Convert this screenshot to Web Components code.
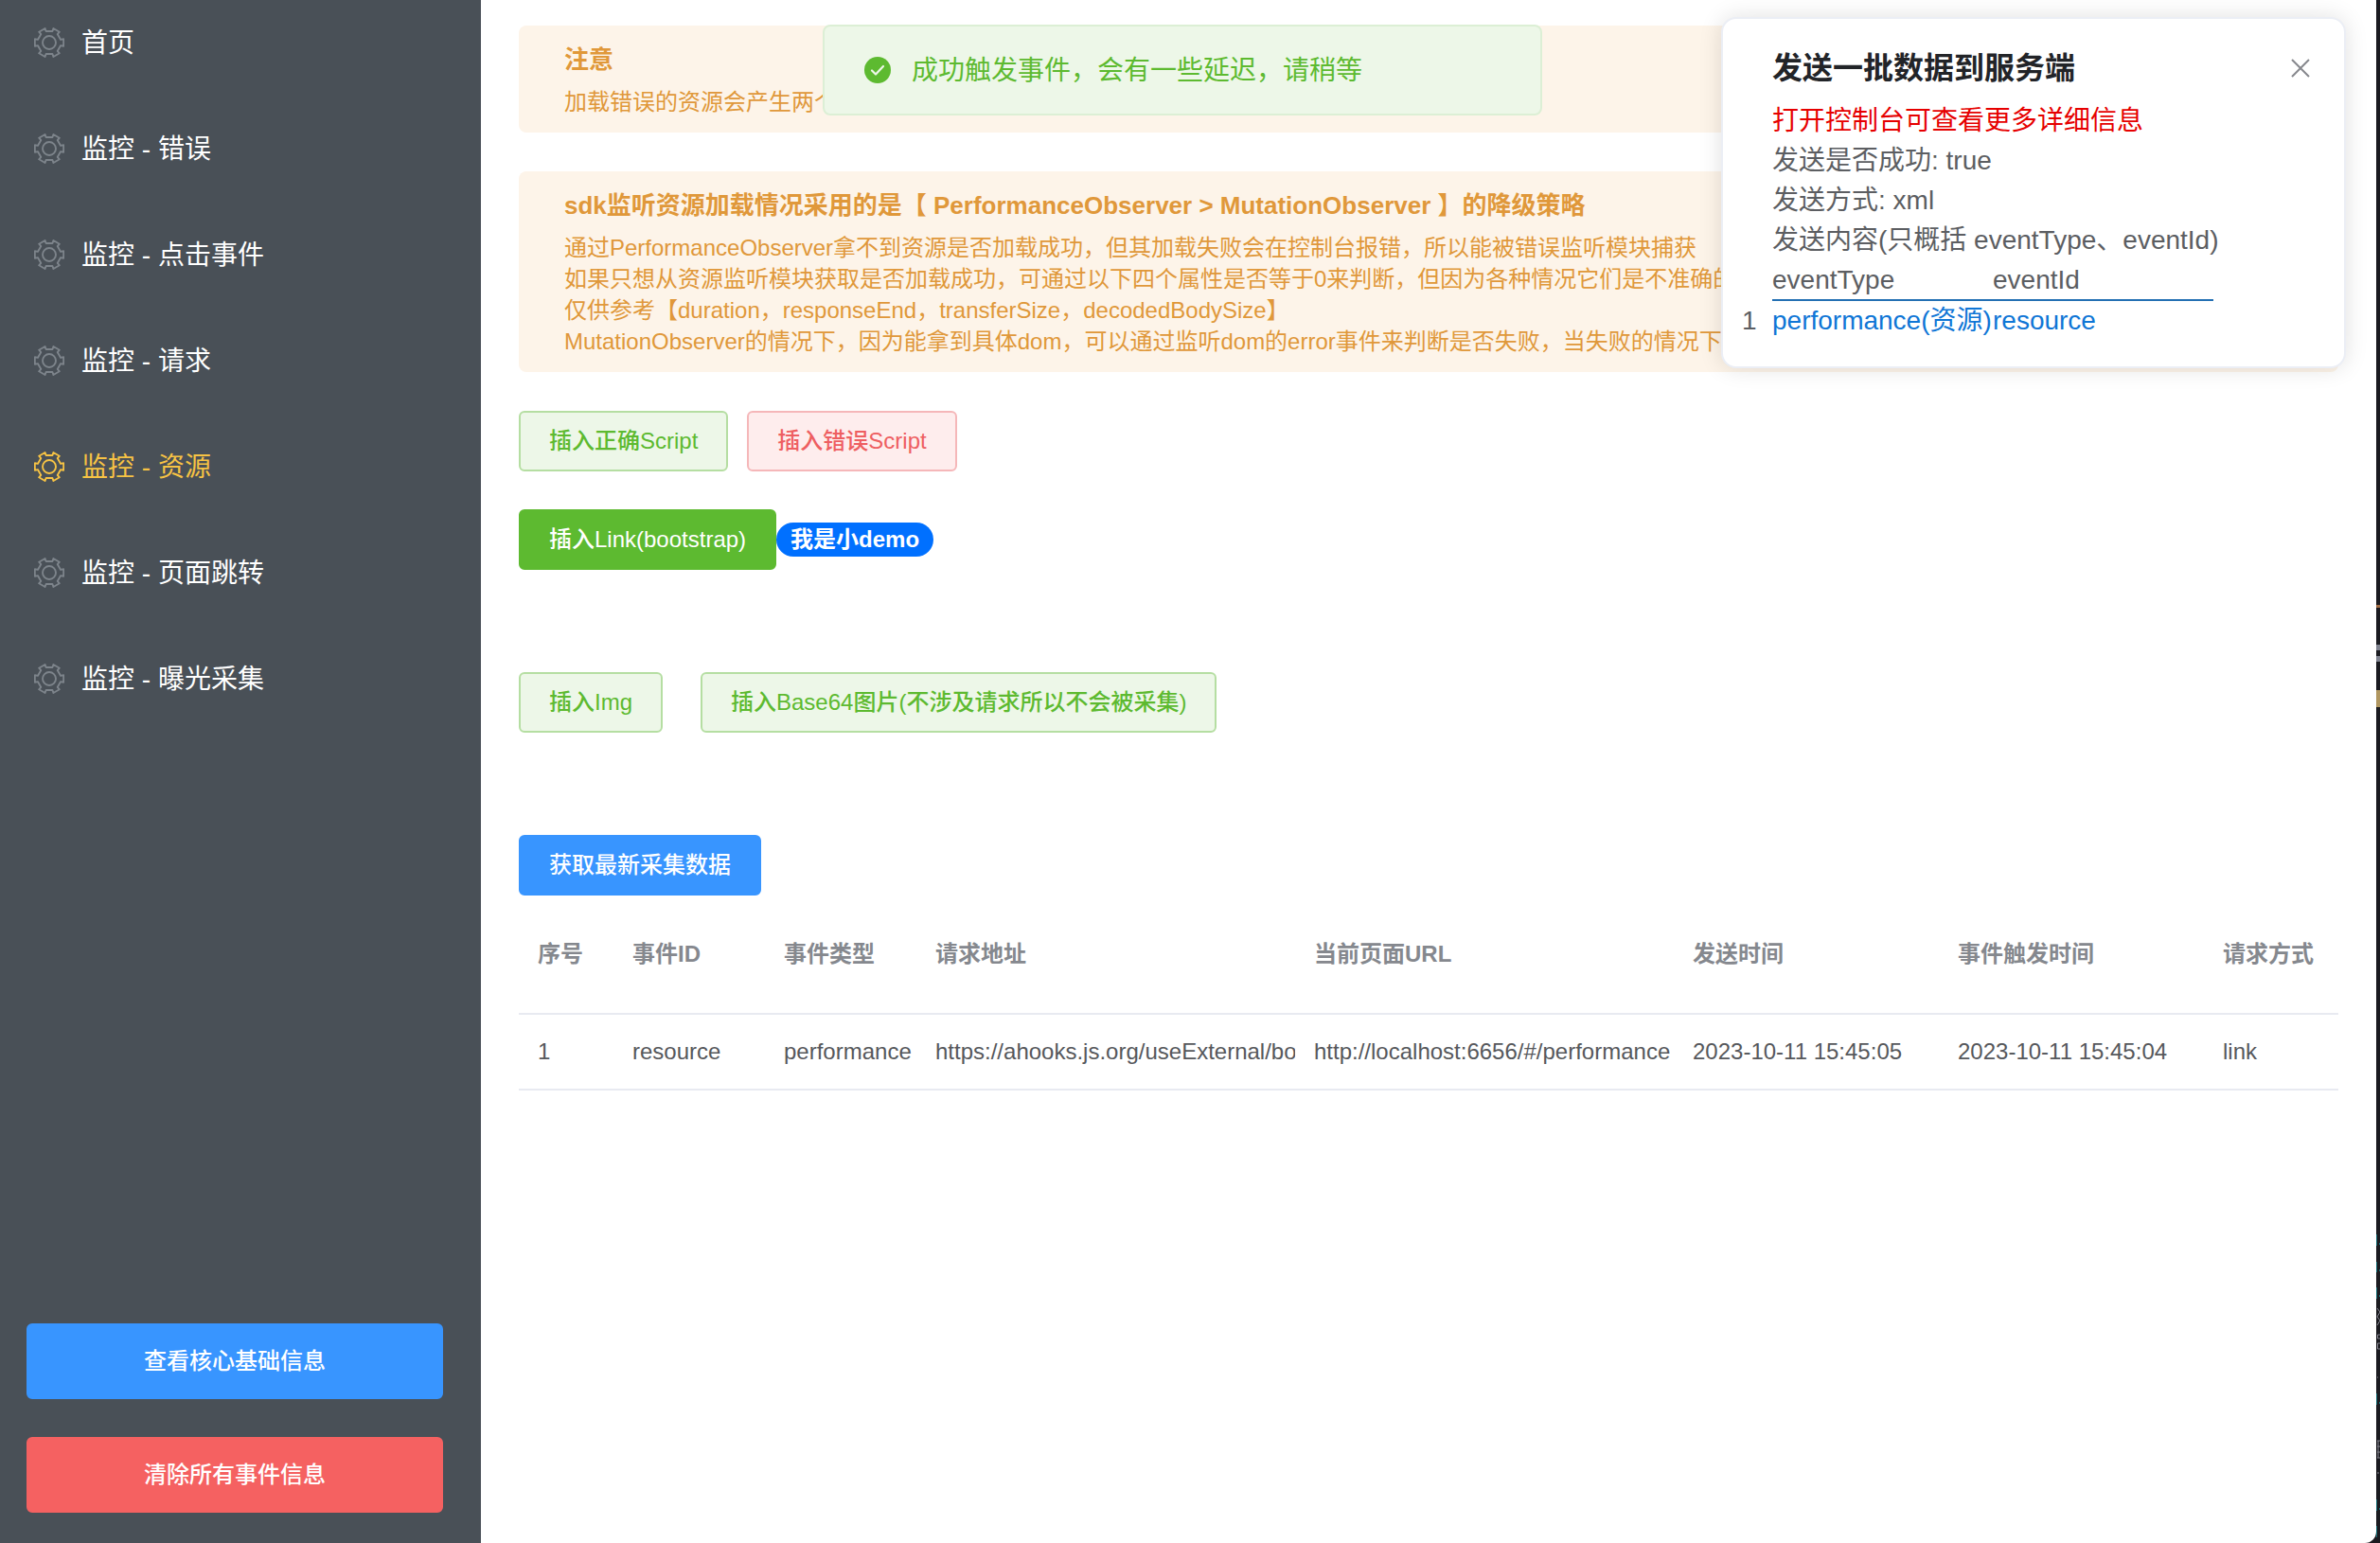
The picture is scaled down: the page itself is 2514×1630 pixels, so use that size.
<!DOCTYPE html>
<html lang="zh-CN">
<head>
<meta charset="utf-8">
<title>监控 - 资源</title>
<style>
  html, body { margin: 0; }
  body {
    background: #1b1b20;
    color: #5c5e62;
    font: 24px/34px "Liberation Sans", "Noto Sans CJK SC", sans-serif;
  }
</style>
</head>
<body>
<app-shell>
  <side-bar slot="side">
    <nav-item>首页</nav-item>
    <nav-item>监控 - 错误</nav-item>
    <nav-item>监控 - 点击事件</nav-item>
    <nav-item>监控 - 请求</nav-item>
    <nav-item active>监控 - 资源</nav-item>
    <nav-item>监控 - 页面跳转</nav-item>
    <nav-item>监控 - 曝光采集</nav-item>
    <ui-button slot="actions" kind="primary" size="large">查看核心基础信息</ui-button>
    <ui-button slot="actions" kind="danger" size="large">清除所有事件信息</ui-button>
  </side-bar>

  <warn-alert>
    <span slot="title">注意</span>
    加载错误的资源会产生两个
  </warn-alert>
  <warn-alert>
    <span slot="title">sdk监听资源加载情况采用的是【 PerformanceObserver &gt; MutationObserver 】的降级策略</span>
    通过PerformanceObserver拿不到资源是否加载成功，但其加载失败会在控制台报错，所以能被错误监听模块捕获<br>
    如果只想从资源监听模块获取是否加载成功，可通过以下四个属性是否等于0来判断，但因为各种情况它们是不准确的<br>
    仅供参考【duration，responseEnd，transferSize，decodedBodySize】<br>
    MutationObserver的情况下，因为能拿到具体dom，可以通过监听dom的error事件来判断是否失败，当失败的情况下
  </warn-alert>

  <button-row>
    <ui-button kind="success-plain">插入正确Script</ui-button>
    <ui-button kind="danger-plain">插入错误Script</ui-button>
  </button-row>
  <button-row space="large" joined>
    <ui-button kind="success">插入Link(bootstrap)</ui-button>
    <demo-badge>我是小demo</demo-badge>
  </button-row>
  <button-row space="large" wide>
    <ui-button kind="success-plain">插入Img</ui-button>
    <ui-button kind="success-plain">插入Base64图片(不涉及请求所以不会被采集)</ui-button>
  </button-row>
  <button-row space="none">
    <ui-button kind="primary">获取最新采集数据</ui-button>
  </button-row>
  <event-table></event-table>
</app-shell>
<toast-message>成功触发事件，会有一些延迟，请稍等</toast-message>
<notice-card></notice-card>

<script>
  function define(name, html) {
    const template = document.createElement('template');
    template.innerHTML = html;
    customElements.define(name, class extends HTMLElement {
      constructor() {
        super();
        this.attachShadow({ mode: 'open' }).append(template.content.cloneNode(true));
      }
    });
  }

  define('app-shell', `
    <style>
      :host { display: grid; grid-template-columns: 508px minmax(0, 1fr) 4px; min-height: 100vh; }
      main { background: #fff; padding: 27px 40px 40px; border-radius: 0 0 12px 0; }
      .edge { overflow: hidden; position: relative; }
      svg { display: block; position: absolute; top: 0; left: 0; }
    </style>
    <slot name="side"></slot>
    <main><slot></slot></main>
    <div class="edge" aria-hidden="true">
      <svg width="4" height="1630" viewBox="0 0 4 1630">
        <path fill="#a06c44" d="M0 639h4v3H0z"/>
        <path fill="#80838f" d="M0 681h4v6H0zM0 693h4v6H0z"/>
        <path fill="#b09660" d="M0 729h4v18H0z"/>
        <path fill="#156d74" d="M0 1304h1v12H0zM0 1333h1v11H0zM0 1360h1v12H0zM0 1472h1v12H0zM0 1584h1v12H0zM0 1612h1v12H0zM3 1313h1v2H3zM3 1341h1v2H3zM3 1368h1v2H3zM3 1481h1v2H3zM3 1593h1v2H3z"/>
        <path fill="none" stroke="#85858f" d="M1 1382l3 4l-3 5l3 4l-3 5M4 1410H1.500v4H4M4 1419H1.500v6H4M1 1455h1M1 1522h3M1 1528h3M1 1534h3M1 1540h3M2 1522v18M1 1556h2"/>
      </svg>
    </div>`);

  define('side-bar', `
    <style>
      :host { display: flex; flex-direction: column; justify-content: space-between; background: #495057; }
      nav { display: flex; flex-direction: column; gap: 22px; }
      .actions { display: flex; flex-direction: column; gap: 40px; padding: 0 40px 32px 28px; }
    </style>
    <nav><slot></slot></nav>
    <div class="actions"><slot name="actions"></slot></div>`);

  define('nav-item', `
    <style>
      :host { display: block; --text: #fff; --icon: #7d848b; }
      :host([active]) { --text: #f7c344; --icon: #f7c344; }
      a { display: flex; align-items: center; gap: 18px; height: 90px; padding-left: 36px;
          color: var(--text); font-size: 28px; text-decoration: none; }
      svg { color: var(--icon); flex: none; }
      span { padding-top: 2px; }
    </style>
    <a href="#">
      <svg width="32" height="32" viewBox="-16 -16 32 32" fill="none" stroke="currentColor" stroke-width="1.900" stroke-linejoin="round" aria-hidden="true">
        <path d="M-4.400-15L-3.400-12H3.400L4.400-15L10.800-11.300L8.700-8.900L12.100-3.100L15.200-3.700V3.700L12.100 3.100L8.700 8.900L10.800 11.300L4.400 15L3.400 12H-3.400L-4.400 15L-10.800 11.300L-8.700 8.900L-12.100 3.100L-15.200 3.700V-3.700L-12.100-3.100L-8.700-8.900L-10.800-11.300Z"/>
        <circle r="7"/>
      </svg>
      <span><slot></slot></span>
    </a>`);

  define('ui-button', `
    <style>
      :host { display: block; --bg: #3895ff; --line: #3895ff; --text: #fff; }
      :host([kind="danger"]) { --bg: #f56161; --line: #f56161; }
      :host([kind="success"]) { --bg: #5dba30; --line: #5dba30; }
      :host([kind="success-plain"]) { --bg: #edf7e8; --line: #b5dea2; --text: #5dba30; }
      :host([kind="danger-plain"]) { --bg: #feeded; --line: #f5b7b9; --text: #ee5f61; }
      button { display: block; box-sizing: border-box; width: 100%; height: 64px; margin: 0; padding: 0 30px;
               border: 2px solid var(--line); border-radius: 6px; background: var(--bg); color: var(--text);
               font: 500 24px/32px "Liberation Sans", "Noto Sans CJK SC", sans-serif; white-space: nowrap; }
      :host([size="large"]) button { height: 80px; }
    </style>
    <button type="button"><slot></slot></button>`);

  define('warn-alert', `
    <style>
      :host { display: block; background: #fdf4e9; color: #e0983a; border-radius: 8px;
              padding: 16px 48px; margin-bottom: 41px; }
      h2 { margin: 0 0 8px; font-size: 26px; line-height: 40px; font-weight: bold; }
      p { margin: 0; font-size: 24px; line-height: 33px; white-space: nowrap; }
    </style>
    <h2><slot name="title"></slot></h2>
    <p><slot></slot></p>`);

  define('button-row', `
    <style>
      :host { display: flex; align-items: center; gap: 20px; margin-bottom: 40px; }
      :host([wide]) { gap: 40px; }
      :host([joined]) { gap: 0; }
      :host([space="large"]) { margin-bottom: 108px; }
      :host([space="none"]) { margin-bottom: 0; }
    </style>
    <slot></slot>`);

  define('demo-badge', `
    <style>
      :host { display: block; padding: 0 15px; border-radius: 18px; background: #0070ff; color: #fff;
              font-weight: bold; font-size: 24px; line-height: 36px; }
    </style>
    <slot></slot>`);

  define('event-table', `
    <style>
      :host { display: block; }
      table { width: 100%; table-layout: fixed; border-collapse: separate; border-spacing: 0; font-size: 24px; line-height: 34px; }
      th, td { box-sizing: border-box; padding: 0 0 0 20px; border-bottom: 2px solid #e8eaf1; text-align: left;
               white-space: nowrap; overflow: hidden; }
      th { height: 126px; color: #85888e; font-weight: bold; }
      td { height: 80px; color: #56585c; }
      .s { width: 100px; } .m { width: 160px; } .l { width: 400px; } .t { width: 280px; }
    </style>
    <table>
      <colgroup><col class="s"><col class="m"><col class="m"><col class="l"><col class="l"><col class="t"><col class="t"><col></colgroup>
      <thead><tr><th>序号</th><th>事件ID</th><th>事件类型</th><th>请求地址</th><th>当前页面URL</th><th>发送时间</th><th>事件触发时间</th><th>请求方式</th></tr></thead>
      <tbody><tr><td>1</td><td>resource</td><td>performance</td><td>https://ahooks.js.org/useExternal/bo</td><td>http://localhost:6656/#/performance</td><td>2023-10-11 15:45:05</td><td>2023-10-11 15:45:04</td><td>link</td></tr></tbody>
    </table>`);

  define('toast-message', `
    <style>
      :host { position: absolute; top: 26px; left: 869px; box-sizing: border-box; width: 760px; height: 96px;
              display: flex; align-items: center; gap: 20px; padding: 0 40px;
              background: #edf7e8; border: 2px solid #dcefd5; border-radius: 8px; color: #5dba30; font-size: 28px; }
      svg { flex: none; }
      span { padding-top: 2px; }
    </style>
    <svg width="32" height="32" viewBox="0 0 32 32" aria-hidden="true">
      <circle cx="16" cy="16" r="14" fill="#5dba30"/>
      <path d="M10 16.500l4 4l8-8.500" fill="none" stroke="#edf7e8" stroke-width="2.200" stroke-linecap="round" stroke-linejoin="round"/>
    </svg>
    <span><slot></slot></span>`);

  define('notice-card', `
    <style>
      :host { position: absolute; top: 18px; right: 36px; box-sizing: border-box; width: 660px;
              padding: 28px 28px 27px 20px; background: #fff; border: 2px solid #ebeef5; border-radius: 16px;
              box-shadow: 0 0 24px rgba(0, 0, 0, .12); color: #5c5e62; font-size: 28px; }
      header { display: flex; align-items: center; justify-content: space-between; padding-left: 32px; }
      h2 { margin: 0; color: #222428; font-size: 32px; line-height: 48px; font-weight: bold; }
      button { display: block; width: 36px; height: 36px; padding: 0; border: 0; background: none; color: #86888d; }
      svg { display: block; margin: auto; }
      .body { padding-top: 11px; line-height: 42px; white-space: nowrap; }
      p { margin: 0; padding-left: 32px; }
      .hint { color: #e60000; }
      table { width: 498px; table-layout: fixed; border-collapse: separate; border-spacing: 0; line-height: 42px; }
      th, td { padding: 0; font-weight: normal; text-align: left; }
      .n { width: 32px; }
      thead th { border-bottom: 2px solid #2470b3; line-height: 41px; }
      tbody td { color: #0f76d6; }
    </style>
    <header>
      <h2>发送一批数据到服务端</h2>
      <button type="button" aria-label="关闭">
        <svg width="20" height="20" viewBox="0 0 20 20" fill="none" stroke="currentColor" stroke-width="2" aria-hidden="true"><path d="M1 1L19 19M19 1L1 19"/></svg>
      </button>
    </header>
    <div class="body">
      <p class="hint">打开控制台可查看更多详细信息</p>
      <p>发送是否成功: true</p>
      <p>发送方式: xml</p>
      <p>发送内容(只概括 eventType、eventId)</p>
      <table>
        <colgroup><col class="n"><col><col></colgroup>
        <thead><tr><td></td><th>eventType</th><th>eventId</th></tr></thead>
        <tbody><tr><th>1</th><td>performance(资源)</td><td>resource</td></tr></tbody>
      </table>
    </div>`);
</script>
</body>
</html>
